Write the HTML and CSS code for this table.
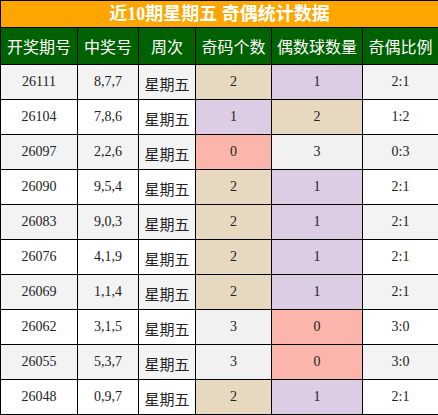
FILE: index.html
```html
<!DOCTYPE html>
<html lang="zh">
<head>
    <meta charset="UTF-8">
    <title>近10期星期五 奇偶统计数据</title>
    <link rel="stylesheet" href="styles.css">
</head>
<body>
    <table class="stats">
        <colgroup>
            <col class="c1"><col class="c2"><col class="c3"><col class="c4"><col class="c5"><col class="c6">
        </colgroup>
        <thead>
            <tr class="title-row"><th colspan="6">近10期星期五 奇偶统计数据</th></tr>
            <tr class="head-row">
                <th>开奖期号</th><th>中奖号</th><th>周次</th><th>奇码个数</th><th>偶数球数量</th><th>奇偶比例</th>
            </tr>
        </thead>
        <tbody>
            <tr><td>26111</td><td>8,7,7</td><td class="day">星期五</td><td class="v2">2</td><td class="v1">1</td><td>2:1</td></tr>
            <tr><td>26104</td><td>7,8,6</td><td class="day">星期五</td><td class="v1">1</td><td class="v2">2</td><td>1:2</td></tr>
            <tr><td>26097</td><td>2,2,6</td><td class="day">星期五</td><td class="v0">0</td><td class="v3">3</td><td>0:3</td></tr>
            <tr><td>26090</td><td>9,5,4</td><td class="day">星期五</td><td class="v2">2</td><td class="v1">1</td><td>2:1</td></tr>
            <tr><td>26083</td><td>9,0,3</td><td class="day">星期五</td><td class="v2">2</td><td class="v1">1</td><td>2:1</td></tr>
            <tr><td>26076</td><td>4,1,9</td><td class="day">星期五</td><td class="v2">2</td><td class="v1">1</td><td>2:1</td></tr>
            <tr><td>26069</td><td>1,1,4</td><td class="day">星期五</td><td class="v2">2</td><td class="v1">1</td><td>2:1</td></tr>
            <tr><td>26062</td><td>3,1,5</td><td class="day">星期五</td><td class="v3">3</td><td class="v0">0</td><td>3:0</td></tr>
            <tr><td>26055</td><td>5,3,7</td><td class="day">星期五</td><td class="v3">3</td><td class="v0">0</td><td>3:0</td></tr>
            <tr><td>26048</td><td>0,9,7</td><td class="day">星期五</td><td class="v2">2</td><td class="v1">1</td><td>2:1</td></tr>
        </tbody>
    </table>
</body>
</html>
```

FILE: styles.css
```css
body {
    margin: 0;
    background-color: #ffffff;
}

/* Table */
.stats {
    border-collapse: collapse;
    width: 438px;
    table-layout: fixed;
    font-family: "Liberation Serif", "Times New Roman", serif;
    font-size: 14px;
    color: #222222;
}

.c1 { width: 77px; }
.c2 { width: 61px; }
.c3 { width: 57px; }
.c4 { width: 76px; }
.c5 { width: 91px; }
.c6 { width: 76px; }

.stats th,
.stats td {
    border: 1px solid #000000;
    text-align: center;
    vertical-align: middle;
    padding: 0;
    line-height: 18px;
}

/* Title bar */
.title-row th {
    height: 26px;
    background-color: #ffa500;
    color: #ffffff;
    font-family: "Liberation Serif", "Noto Sans CJK SC", sans-serif;
    font-size: 18px;
    font-weight: bold;
    line-height: 20px;
}

/* Column headers */
.head-row th {
    height: 36px;
    background-color: #006100;
    color: #ffffff;
    font-family: "Noto Sans CJK SC", "Noto Sans", sans-serif;
    font-size: 16px;
    font-weight: normal;
}

/* Body rows */
.stats td {
    height: 34px;
}

.stats tbody tr:nth-child(odd) td {
    background-color: #f3f3f3;
}

.stats td.day {
    font-family: "Noto Sans CJK SC", sans-serif;
    font-size: 15px;
    height: 30px;
    padding-top: 4px;
}

.stats tbody tr td.v3 { background-color: #f1f1f1; }
.stats tbody tr td.v2 { background-color: #e6d9bf; }
.stats tbody tr td.v1 { background-color: #dccce4; }
.stats tbody tr td.v0 { background-color: #fbb5ab; }
```
